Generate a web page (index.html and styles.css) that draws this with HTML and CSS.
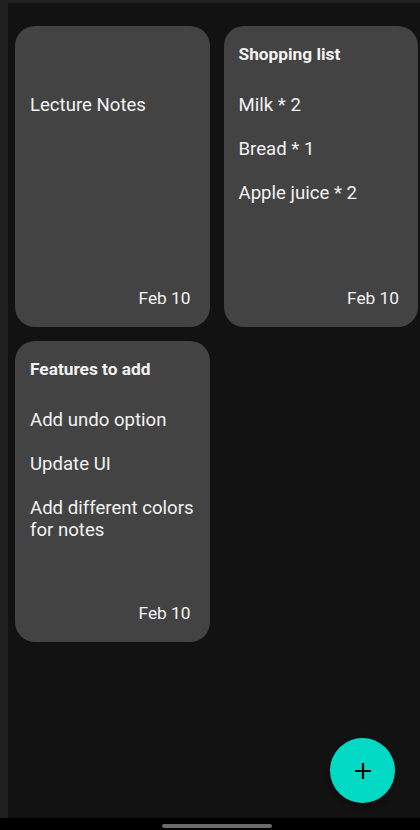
FILE: index.html
```html
<!DOCTYPE html>
<html>
<head>
<meta charset="utf-8">
<link rel="stylesheet" href="styles.css">
</head>
<body>
<div class="screen">
  <div class="side"></div>
  <div class="main">
    <div class="topbar"></div>
    <div class="content">
      <div class="grid">
        <div class="card">
          <div class="title"></div>
          <div class="body">Lecture Notes</div>
          <div class="date">Feb 10</div>
        </div>
        <div class="card">
          <div class="title">Shopping list</div>
          <div class="body">Milk * 2

Bread * 1

Apple juice * 2</div>
          <div class="date">Feb 10</div>
        </div>
        <div class="card">
          <div class="title">Features to add</div>
          <div class="body">Add undo option

Update UI

Add different colors for notes</div>
          <div class="date">Feb 10</div>
        </div>
      </div>
      <button class="fab" aria-label="Add note">
        <svg width="18" height="18" viewBox="0 0 18 18"><path d="M9 1v16M1 9h16" stroke="#000" stroke-width="2.2" fill="none"/></svg>
      </button>
    </div>
  </div>
</div>
<div class="navbar"><div class="pill"></div></div>
</body>
</html>
```
FILE: styles.css
```css
html, body {
  margin: 0;
  padding: 0;
  background: #121212;
  font-family: Roboto, "Noto Sans", sans-serif;
}
.screen {
  display: flex;
  height: 818px;
}
.side {
  width: 8px;
  background: #1f1f1f;
}
.main {
  flex: 1;
  display: flex;
  flex-direction: column;
}
.topbar {
  height: 3px;
  background: #202020;
}
.content {
  flex: 1;
  position: relative;
  padding: 23px 2px 0 7px;
}
.grid {
  display: grid;
  grid-template-columns: 1fr 1fr;
  gap: 14px;
}
.card {
  height: 301px;
  box-sizing: border-box;
  background: #434343;
  border-radius: 20px;
  padding: 17px 14px 18px 15px;
  display: flex;
  flex-direction: column;
  color: #f2f2f2;
}
.title {
  font-weight: bold;
  font-size: 17.3px;
  line-height: 22px;
  height: 22px;
  margin-bottom: 29px;
}
.body {
  font-size: 18.6px;
  line-height: 22px;
  white-space: pre-wrap;
}
.date {
  margin-top: auto;
  text-align: right;
  font-size: 17.3px;
  line-height: 22px;
  padding-right: 5px;
}
.fab {
  position: absolute;
  left: 322px;
  top: 735px;
  width: 65px;
  height: 65px;
  border-radius: 50%;
  border: none;
  background: #03dac5;
  box-shadow: 0 3px 6px rgba(0,0,0,0.4);
  display: flex;
  align-items: center;
  justify-content: center;
  padding: 0;
}
.navbar {
  height: 12px;
  background: #000;
  position: relative;
}
.pill {
  position: absolute;
  left: 162px;
  top: 6px;
  width: 110px;
  height: 4px;
  border-radius: 2px;
  background: #6b6b6b;
}
```
